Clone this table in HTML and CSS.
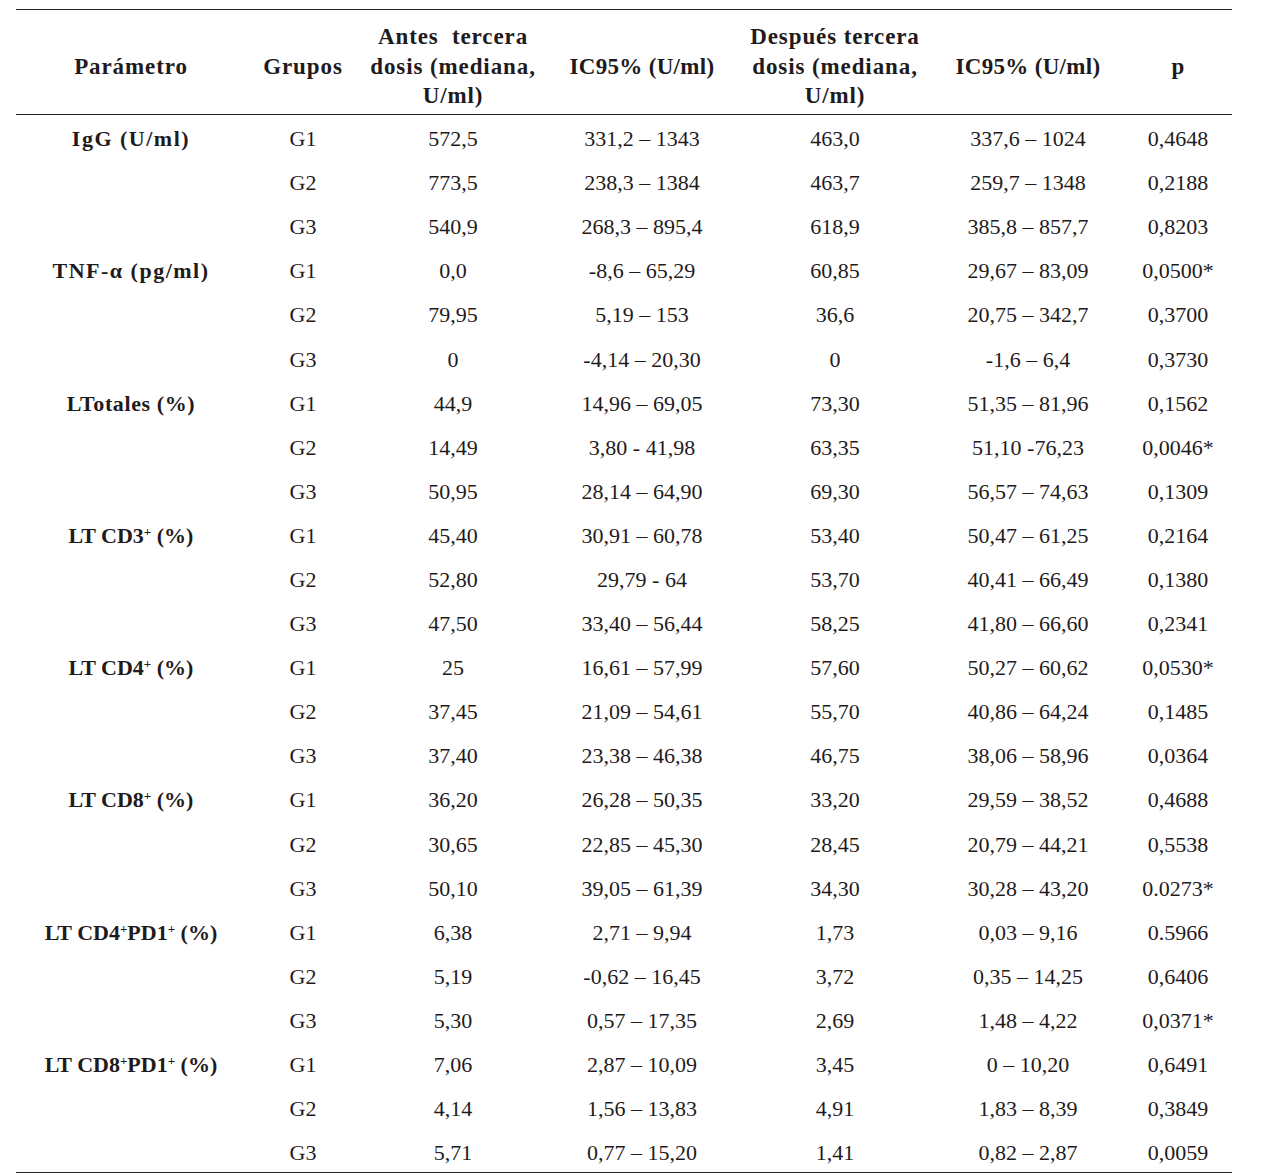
FILE: index.html
```html
<!DOCTYPE html>
<html lang="es">
<head>
<meta charset="utf-8">
<title>Tabla</title>
<link rel="stylesheet" href="styles.css">
</head>
<body>
<table class="data">
  <colgroup>
    <col class="c1"><col class="c2"><col class="c3"><col class="c4"><col class="c5"><col class="c6"><col class="c7">
  </colgroup>
  <thead>
    <tr>
      <th class="wide">Parámetro</th>
      <th class="wide">Grupos</th>
      <th class="wide">Antes&nbsp; tercera<br>dosis (mediana,<br>U/ml)</th>
      <th>IC95% (U/ml)</th>
      <th class="wide">Después tercera<br>dosis (mediana,<br>U/ml)</th>
      <th>IC95% (U/ml)</th>
      <th>p</th>
    </tr>
  </thead>
  <tbody>
    <tr><td class="param spaced">IgG (U/ml)</td><td>G1</td><td>572,5</td><td>331,2 – 1343</td><td>463,0</td><td>337,6 – 1024</td><td>0,4648</td></tr>
    <tr><td class="param"></td><td>G2</td><td>773,5</td><td>238,3 – 1384</td><td>463,7</td><td>259,7 – 1348</td><td>0,2188</td></tr>
    <tr><td class="param"></td><td>G3</td><td>540,9</td><td>268,3 – 895,4</td><td>618,9</td><td>385,8 – 857,7</td><td>0,8203</td></tr>
    <tr><td class="param spaced">TNF-α (pg/ml)</td><td>G1</td><td>0,0</td><td>-8,6 – 65,29</td><td>60,85</td><td>29,67 – 83,09</td><td>0,0500*</td></tr>
    <tr><td class="param"></td><td>G2</td><td>79,95</td><td>5,19 – 153</td><td>36,6</td><td>20,75 – 342,7</td><td>0,3700</td></tr>
    <tr><td class="param"></td><td>G3</td><td>0</td><td>-4,14 – 20,30</td><td>0</td><td>-1,6 – 6,4</td><td>0,3730</td></tr>
    <tr><td class="param semi">LTotales (%)</td><td>G1</td><td>44,9</td><td>14,96 – 69,05</td><td>73,30</td><td>51,35 – 81,96</td><td>0,1562</td></tr>
    <tr><td class="param"></td><td>G2</td><td>14,49</td><td>3,80 - 41,98</td><td>63,35</td><td>51,10 -76,23</td><td>0,0046*</td></tr>
    <tr><td class="param"></td><td>G3</td><td>50,95</td><td>28,14 – 64,90</td><td>69,30</td><td>56,57 – 74,63</td><td>0,1309</td></tr>
    <tr><td class="param">LT CD3<sup>+</sup> (%)</td><td>G1</td><td>45,40</td><td>30,91 – 60,78</td><td>53,40</td><td>50,47 – 61,25</td><td>0,2164</td></tr>
    <tr><td class="param"></td><td>G2</td><td>52,80</td><td>29,79 - 64</td><td>53,70</td><td>40,41 – 66,49</td><td>0,1380</td></tr>
    <tr><td class="param"></td><td>G3</td><td>47,50</td><td>33,40 – 56,44</td><td>58,25</td><td>41,80 – 66,60</td><td>0,2341</td></tr>
    <tr><td class="param">LT CD4<sup>+</sup> (%)</td><td>G1</td><td>25</td><td>16,61 – 57,99</td><td>57,60</td><td>50,27 – 60,62</td><td>0,0530*</td></tr>
    <tr><td class="param"></td><td>G2</td><td>37,45</td><td>21,09 – 54,61</td><td>55,70</td><td>40,86 – 64,24</td><td>0,1485</td></tr>
    <tr><td class="param"></td><td>G3</td><td>37,40</td><td>23,38 – 46,38</td><td>46,75</td><td>38,06 – 58,96</td><td>0,0364</td></tr>
    <tr><td class="param">LT CD8<sup>+</sup> (%)</td><td>G1</td><td>36,20</td><td>26,28 – 50,35</td><td>33,20</td><td>29,59 – 38,52</td><td>0,4688</td></tr>
    <tr><td class="param"></td><td>G2</td><td>30,65</td><td>22,85 – 45,30</td><td>28,45</td><td>20,79 – 44,21</td><td>0,5538</td></tr>
    <tr><td class="param"></td><td>G3</td><td>50,10</td><td>39,05 – 61,39</td><td>34,30</td><td>30,28 – 43,20</td><td>0.0273*</td></tr>
    <tr><td class="param">LT CD4<sup>+</sup>PD1<sup>+</sup> (%)</td><td>G1</td><td>6,38</td><td>2,71 – 9,94</td><td>1,73</td><td>0,03 – 9,16</td><td>0.5966</td></tr>
    <tr><td class="param"></td><td>G2</td><td>5,19</td><td>-0,62 – 16,45</td><td>3,72</td><td>0,35 – 14,25</td><td>0,6406</td></tr>
    <tr><td class="param"></td><td>G3</td><td>5,30</td><td>0,57 – 17,35</td><td>2,69</td><td>1,48 – 4,22</td><td>0,0371*</td></tr>
    <tr><td class="param">LT CD8<sup>+</sup>PD1<sup>+</sup> (%)</td><td>G1</td><td>7,06</td><td>2,87 – 10,09</td><td>3,45</td><td>0 – 10,20</td><td>0,6491</td></tr>
    <tr><td class="param"></td><td>G2</td><td>4,14</td><td>1,56 – 13,83</td><td>4,91</td><td>1,83 – 8,39</td><td>0,3849</td></tr>
    <tr><td class="param"></td><td>G3</td><td>5,71</td><td>0,77 – 15,20</td><td>1,41</td><td>0,82 – 2,87</td><td>0,0059</td></tr>
  </tbody>
</table>
</body>
</html>
```

FILE: styles.css
```css
html, body {
  margin: 0;
  padding: 0;
  background: #ffffff;
}

body {
  padding: 9px 0 0 16px;
  font-family: "Liberation Serif", "Times New Roman", serif;
  color: #1f1b1c;
}

.data {
  border-collapse: collapse;
  table-layout: fixed;
  width: 1216px;
  border-top: 1.5px solid #231f20;
  border-bottom: 1.5px solid #231f20;
}

.c1 { width: 230px; }
.c2 { width: 114px; }
.c3 { width: 186px; }
.c4 { width: 192px; }
.c5 { width: 194px; }
.c6 { width: 192px; }
.c7 { width: 108px; }

.data th {
  font-weight: bold;
  font-size: 23px;
  line-height: 29.5px;
  text-align: center;
  vertical-align: middle;
  padding: 12px 0 3px;
  height: 88px;
  border-bottom: 1.5px solid #231f20;
  letter-spacing: 0.3px;
}

.data th.wide {
  letter-spacing: 0.9px;
}

.data tbody tr {
  height: 44.1px;
}

.data td {
  font-size: 22px;
  padding: 6px 0 0;
  text-align: center;
  vertical-align: middle;
  line-height: 26px;
  white-space: nowrap;
}

.data td.param {
  font-weight: bold;
}

.data td.spaced {
  letter-spacing: 1.5px;
}

.data td.semi {
  letter-spacing: 0.6px;
}

.data sup {
  font-size: 13px;
  line-height: 0;
  vertical-align: 7px;
}
```
